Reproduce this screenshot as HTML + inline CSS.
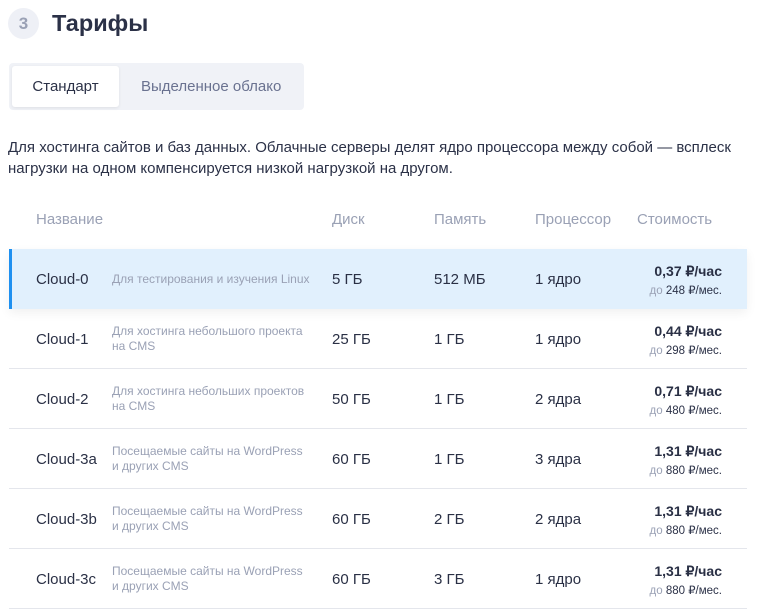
<!DOCTYPE html>
<html><head><meta charset="utf-8"><style>
body{margin:0;background:#fff;font-family:"Liberation Sans",sans-serif;color:#2a3045;width:758px;height:610px;overflow:hidden;position:relative}
.a{position:absolute;white-space:nowrap}
.circle{left:8px;top:8px;width:31px;height:31px;border-radius:50%;background:#eef0f6;color:#9aa1b5;font-size:17px;font-weight:bold;text-align:center;line-height:31px}
.title{left:52px;top:10px;font-size:23.5px;font-weight:bold;color:#2b3147}
.tabs{left:9px;top:63px;width:295px;height:47px;background:#f0f2f7;border-radius:4px}
.tab1{left:12px;top:66px;width:107px;height:41px;background:#fff;border-radius:3px;box-shadow:0 1px 3px rgba(0,0,0,.08);font-size:15px;text-align:center;line-height:41px;color:#2b3147}
.tab2{left:141px;top:78px;font-size:15px;color:#6a7290}
.p{left:8px;top:137px;font-size:15px;line-height:21px;color:#2b3147}
.h{top:211px;font-size:15px;color:#9aa1b5}
.row{left:9px;width:738px;height:60px;border-bottom:1px solid #e4e6ec;box-sizing:border-box}
.sel{background:#e1f0fd;border-left:3px solid #1e90f0;border-bottom:none;box-shadow:0 4px 10px rgba(0,0,0,.06)}
.n{left:36px;font-size:15px;margin-top:1px}
.d{left:112px;font-size:12px;line-height:15px;color:#9aa1b5;margin-top:1px}
.c{font-size:15px;margin-top:1px}
.pr{right:36px;font-size:14px;font-weight:bold;text-align:right;margin-top:1px}
.pm{right:36px;font-size:11.5px;text-align:right;color:#2b3147;margin-top:1px}
.pm span{color:#9aa1b5}
</style></head><body>
<div class="a circle">3</div>
<div class="a title">Тарифы</div>
<div class="a tabs"></div>
<div class="a tab1">Стандарт</div>
<div class="a tab2">Выделенное облако</div>
<div class="a p">Для хостинга сайтов и баз данных. Облачные серверы делят ядро процессора между собой — всплеск<br>нагрузки на одном компенсируется низкой нагрузкой на другом.</div>
<div class="a h" style="left:36px">Название</div>
<div class="a h" style="left:332px">Диск</div>
<div class="a h" style="left:434px">Память</div>
<div class="a h" style="left:535px">Процессор</div>
<div class="a h" style="left:637px">Стоимость</div>

<div class="a row sel" style="top:249px;height:60px"></div>
<div class="a row" style="top:309px"></div>
<div class="a row" style="top:369px"></div>
<div class="a row" style="top:429px"></div>
<div class="a row" style="top:489px"></div>
<div class="a row" style="top:549px"></div>

<div class="a n" style="top:270px">Cloud-0</div><div class="a d" style="top:271px">Для тестирования и изучения Linux</div>
<div class="a c" style="left:332px;top:270px">5 ГБ</div><div class="a c" style="left:434px;top:270px">512 МБ</div><div class="a c" style="left:535px;top:270px">1 ядро</div>
<div class="a pr" style="top:262px">0,37 ₽/час</div><div class="a pm" style="top:282px"><span>до</span> 248 ₽/мес.</div>

<div class="a n" style="top:330px">Cloud-1</div><div class="a d" style="top:323px">Для хостинга небольшого проекта<br>на CMS</div>
<div class="a c" style="left:332px;top:330px">25 ГБ</div><div class="a c" style="left:434px;top:330px">1 ГБ</div><div class="a c" style="left:535px;top:330px">1 ядро</div>
<div class="a pr" style="top:322px">0,44 ₽/час</div><div class="a pm" style="top:342px"><span>до</span> 298 ₽/мес.</div>

<div class="a n" style="top:390px">Cloud-2</div><div class="a d" style="top:383px">Для хостинга небольших проектов<br>на CMS</div>
<div class="a c" style="left:332px;top:390px">50 ГБ</div><div class="a c" style="left:434px;top:390px">1 ГБ</div><div class="a c" style="left:535px;top:390px">2 ядра</div>
<div class="a pr" style="top:382px">0,71 ₽/час</div><div class="a pm" style="top:402px"><span>до</span> 480 ₽/мес.</div>

<div class="a n" style="top:450px">Cloud-3a</div><div class="a d" style="top:443px">Посещаемые сайты на WordPress<br>и других CMS</div>
<div class="a c" style="left:332px;top:450px">60 ГБ</div><div class="a c" style="left:434px;top:450px">1 ГБ</div><div class="a c" style="left:535px;top:450px">3 ядра</div>
<div class="a pr" style="top:442px">1,31 ₽/час</div><div class="a pm" style="top:462px"><span>до</span> 880 ₽/мес.</div>

<div class="a n" style="top:510px">Cloud-3b</div><div class="a d" style="top:503px">Посещаемые сайты на WordPress<br>и других CMS</div>
<div class="a c" style="left:332px;top:510px">60 ГБ</div><div class="a c" style="left:434px;top:510px">2 ГБ</div><div class="a c" style="left:535px;top:510px">2 ядра</div>
<div class="a pr" style="top:502px">1,31 ₽/час</div><div class="a pm" style="top:522px"><span>до</span> 880 ₽/мес.</div>

<div class="a n" style="top:570px">Cloud-3c</div><div class="a d" style="top:563px">Посещаемые сайты на WordPress<br>и других CMS</div>
<div class="a c" style="left:332px;top:570px">60 ГБ</div><div class="a c" style="left:434px;top:570px">3 ГБ</div><div class="a c" style="left:535px;top:570px">1 ядро</div>
<div class="a pr" style="top:562px">1,31 ₽/час</div><div class="a pm" style="top:582px"><span>до</span> 880 ₽/мес.</div>
</body></html>
